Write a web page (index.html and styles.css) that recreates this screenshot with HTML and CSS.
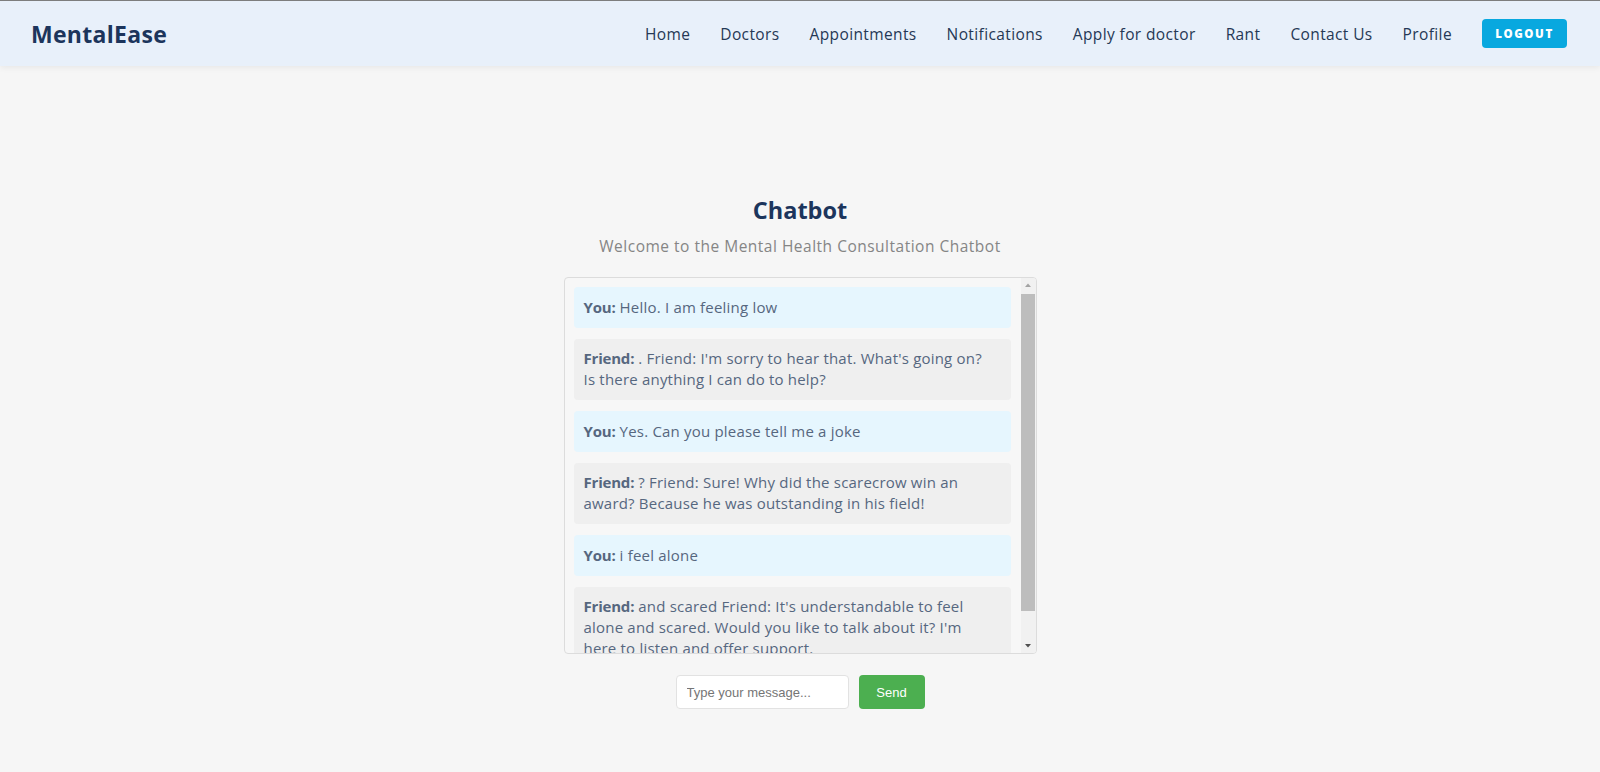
FILE: index.html
```html
<!DOCTYPE html>
<html lang="en">
<head>
<meta charset="utf-8">
<title>MentalEase - Chatbot</title>
<link rel="stylesheet" href="styles.css">
</head>
<body>
<header class="navbar">
  <div class="logo">MentalEase</div>
  <nav class="nav">
    <a href="#">Home</a>
    <a href="#">Doctors</a>
    <a href="#">Appointments</a>
    <a href="#">Notifications</a>
    <a href="#">Apply for doctor</a>
    <a href="#">Rant</a>
    <a href="#">Contact Us</a>
    <a href="#">Profile</a>
    <button class="logout">LOGOUT</button>
  </nav>
</header>
<main class="main">
  <h1 class="title">Chatbot</h1>
  <p class="subtitle">Welcome to the Mental Health Consultation Chatbot</p>
  <div class="chatbox">
    <div class="messages">
      <div class="msg user"><b>You:</b> Hello. I am feeling low</div>
      <div class="msg bot"><b>Friend:</b> . Friend: I'm sorry to hear that. What's going on? Is there anything I can do to help?</div>
      <div class="msg user"><b>You:</b> Yes. Can you please tell me a joke</div>
      <div class="msg bot"><b>Friend:</b> ? Friend: Sure! Why did the scarecrow win an award? Because he was outstanding in his field!</div>
      <div class="msg user"><b>You:</b> i feel alone</div>
      <div class="msg bot"><b>Friend:</b> and scared Friend: It's understandable to feel alone and scared. Would you like to talk about it? I'm here to listen and offer support.</div>
    </div>
    <div class="scrollbar" aria-hidden="true">
      <svg class="arrow" width="14" height="14" viewBox="0 0 14 14"><path d="M4 9 L7 5.5 L10 9 Z" fill="#a3a3a3"/></svg>
      <div class="track"><div class="thumb"></div></div>
      <svg class="arrow" width="14" height="14" viewBox="0 0 14 14"><path d="M4 5 L7 8.5 L10 5 Z" fill="#505050"/></svg>
    </div>
  </div>
  <form class="composer">
    <input class="input" type="text" placeholder="Type your message...">
    <button class="send" type="button">Send</button>
  </form>
</main>
</body>
</html>
```

FILE: styles.css
```css
* { box-sizing: border-box; }
html, body { margin: 0; padding: 0; }
body {
  background: #f6f6f6;
  font-family: "Open Sans", "Noto Sans", sans-serif;
  height: 772px;
  overflow: hidden;
}
.navbar {
  height: 66px;
  background: #e8f0fa;
  border-top: 1px solid #7d7d7d;
  box-shadow: 0 2px 6px rgba(0,0,0,0.06);
  display: flex;
  align-items: center;
  justify-content: space-between;
  padding: 0 33px 0 31px;
}
.logo {
  font-size: 23px;
  font-weight: 700;
  color: #1c355c;
  letter-spacing: 0.3px;
}
.nav {
  display: flex;
  align-items: center;
  gap: 30px;
}
.nav a {
  color: #253855;
  text-decoration: none;
  font-size: 15.5px;
  letter-spacing: 0.38px;
}
.logout {
  background: #08a8df;
  color: #fff;
  border: none;
  border-radius: 4px;
  font-family: inherit;
  font-weight: 800;
  font-size: 11.5px;
  letter-spacing: 1.6px;
  width: 85px;
  height: 29px;
}
.main {
  display: flex;
  flex-direction: column;
  align-items: center;
  padding-top: 128px;
}
.title {
  margin: 0;
  font-size: 23.5px;
  font-weight: 700;
  color: #1c355c;
  line-height: 32px;
}
.subtitle {
  margin: 9px 0 0;
  font-size: 15.5px;
  color: #858585;
  letter-spacing: 0.5px;
  line-height: 22px;
}
.chatbox {
  margin-top: 20px;
  width: 473px;
  height: 377px;
  border: 1px solid #dcdcdc;
  border-radius: 4px;
  background: #f7f7f7;
  display: flex;
  overflow: hidden;
}
.messages {
  flex: 1;
  min-width: 0;
  overflow: hidden;
  padding: 9px 10px 9px 9px;
  display: flex;
  flex-direction: column;
  gap: 11px;
}
.scrollbar {
  width: 15px;
  flex-shrink: 0;
  display: flex;
  flex-direction: column;
  background: #f1f1f1;
  padding-right: 1px;
}
.arrow {
  display: block;
  flex-shrink: 0;
  height: 14px;
}
.track {
  flex: 1;
  display: flex;
  flex-direction: column;
  padding: 2px 0 28px;
}
.thumb {
  flex: 1;
  background: #bdbdbd;
}
.msg {
  flex-shrink: 0;
  padding: 9.5px 13px 10px 10px;
  border-radius: 4px;
  font-size: 15px;
  line-height: 21px;
  color: #56677f;
  letter-spacing: 0.2px;
}
.msg b { font-weight: 700; color: #56677f; letter-spacing: -0.2px; }
.user { background: #e6f6fe; }
.bot { background: #efefef; }
.composer {
  margin-top: 21px;
  display: flex;
  gap: 10px;
}
.input {
  width: 173px;
  height: 34px;
  border: 1px solid #e2e2e2;
  border-radius: 4px;
  background: #fff;
  padding: 0 10px;
  font-family: "Liberation Sans", Arial, sans-serif;
  font-size: 13px;
  color: #333;
}
.input::placeholder { color: #757575; }
.send {
  width: 66px;
  height: 34px;
  border: none;
  border-radius: 4px;
  background: #4caf50;
  color: #fff;
  font-family: "Liberation Sans", Arial, sans-serif;
  font-size: 13px;
}
```
